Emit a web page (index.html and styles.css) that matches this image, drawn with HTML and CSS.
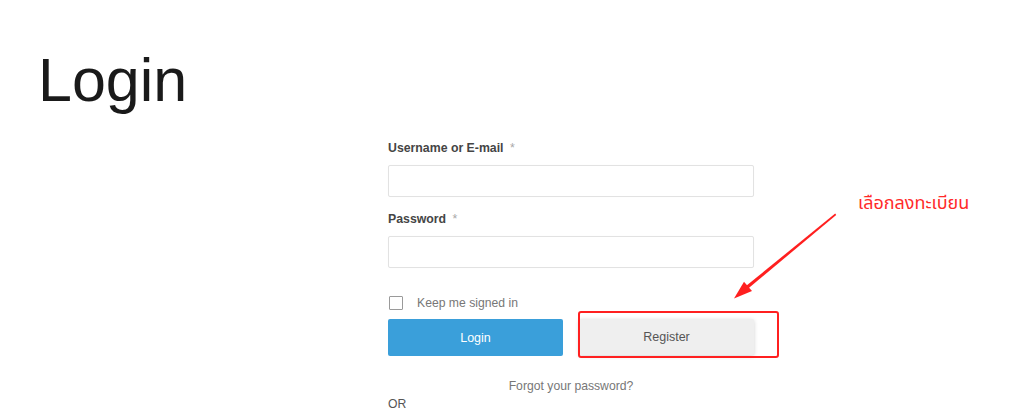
FILE: index.html
```html
<!DOCTYPE html>
<html>
<head>
<meta charset="utf-8">
<link rel="stylesheet" href="styles.css">
</head>
<body>
<div class="page">
  <h1 class="title">Login</h1>
  <form class="login-form">
    <label class="field-label">Username or E-mail <span class="req">*</span></label>
    <div class="input"></div>
    <label class="field-label second">Password <span class="req">*</span></label>
    <div class="input"></div>
    <div class="remember">
      <span class="checkbox"></span>
      <span class="remember-text">Keep me signed in</span>
    </div>
    <div class="buttons">
      <div class="btn btn-login">Login</div>
      <div class="btn btn-register">Register</div>
    </div>
    <div class="forgot">Forgot your password?</div>
    <div class="or">OR</div>
  </form>
</div>
<div class="note-box"></div>
<div class="note-text">เลือกลงทะเบียน</div>
<svg class="note-arrow" width="1024" height="415" viewBox="0 0 1024 415">
  <polygon points="835.2,213.6 836.2,215 747,289.5 745,286.8" fill="#ff1f1f"/>
  <polygon points="734,298.5 752,291 744,281.8" fill="#ff1f1f"/>
</svg>
</body>
</html>
```

FILE: styles.css
```css
html, body {
  margin: 0;
  padding: 0;
  background: #fff;
}
body {
  font-family: "Liberation Sans", Arial, sans-serif;
  width: 1024px;
  height: 415px;
  overflow: hidden;
  position: relative;
}
.page {
  display: flex;
  flex-direction: column;
}
.title {
  margin: 50px 0 0 38px;
  font-size: 61px;
  line-height: 1;
  font-weight: normal;
  color: #1a1a1a;
  height: 61px;
}
.login-form {
  margin: 29px 0 0 388px;
  width: 366px;
  display: flex;
  flex-direction: column;
}
.field-label {
  font-size: 12.3px;
  line-height: 16px;
  font-weight: bold;
  color: #454545;
  margin-bottom: 9px;
}
.field-label.second {
  margin-top: 14px;
}
.req {
  color: #a8a8a8;
  font-weight: normal;
  margin-left: 3px;
}
.input {
  height: 30px;
  border: 1px solid #e2e2e2;
  border-radius: 2px;
  box-shadow: 0 0 1px rgba(0,0,0,0.04);
  background: #fff;
}
.remember {
  display: flex;
  align-items: center;
  margin-top: 27px;
  height: 16px;
}
.checkbox {
  width: 12px;
  height: 12px;
  border: 1.5px solid #9a9a9a;
  border-radius: 1px;
  margin-left: 1px;
}
.remember-text {
  font-size: 12.2px;
  line-height: 16px;
  color: #777;
  margin-left: 14px;
}
.buttons {
  display: flex;
  gap: 16px;
  margin-top: 8px;
}
.btn {
  width: 176px;
  height: 37px;
  display: flex;
  align-items: center;
  justify-content: center;
  font-size: 12.5px;
  border-radius: 2px;
}
.btn-login {
  background: #3a9fda;
  color: #fff;
}
.btn-register {
  background: #efefef;
  color: #555;
  box-shadow: 0 1px 4px rgba(0,0,0,0.18);
  height: 36px;
}
.forgot {
  margin-top: 22px;
  text-align: center;
  font-size: 12.2px;
  line-height: 16px;
  color: #777;
}
.or {
  margin-top: 2px;
  font-size: 12.2px;
  line-height: 16px;
  color: #555;
}
.note-box {
  position: absolute;
  left: 578px;
  top: 311px;
  width: 197px;
  height: 43px;
  border: 2px solid #ff2020;
  border-radius: 3px;
}
.note-text {
  position: absolute;
  left: 858px;
  top: 193px;
  font-family: "Noto Sans Thai", "Noto Sans", "DejaVu Sans", sans-serif;
  font-size: 18px;
  line-height: 22px;
  color: #ff2a2a;
  white-space: nowrap;
}
.note-arrow {
  position: absolute;
  left: 0;
  top: 0;
  pointer-events: none;
}
```
